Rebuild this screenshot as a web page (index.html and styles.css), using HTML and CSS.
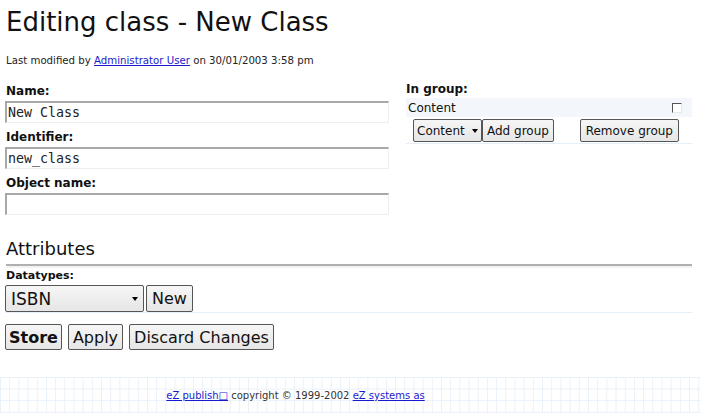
FILE: index.html
```html
<!DOCTYPE html>
<html>
<head>
<meta charset="utf-8">
<link rel="stylesheet" href="styles.css">
</head>
<body>
<div class="page">
  <h1 class="title">Editing class - New Class</h1>
  <p class="modified">Last modified by <a href="#">Administrator User</a> on 30/01/2003 3:58 pm</p>

  <div class="top">
    <div class="left">
      <div class="label">Name:</div>
      <div class="field">New Class</div>
      <div class="label">Identifier:</div>
      <div class="field">new_class</div>
      <div class="label">Object name:</div>
      <div class="field"></div>
    </div>
    <div class="right">
      <div class="label">In group:</div>
      <div class="group-row">
        <span>Content</span>
        <span class="check"></span>
      </div>
      <div class="group-actions">
        <div class="group-left">
          <span class="select small-select">Content <span class="arrow"></span></span>
          <span class="btn">Add group</span>
        </div>
        <span class="btn remove">Remove group</span>
      </div>
    </div>
  </div>

  <h2 class="attr">Attributes</h2>
  <div class="attr-body">
    <div class="dt-label">Datatypes:</div>
    <div class="dt-row">
      <span class="select big-select">ISBN <span class="arrow"></span></span>
      <span class="btn big">New</span>
    </div>
  </div>
  <div class="actions">
    <span class="btn big bold">Store</span>
    <span class="btn big">Apply</span>
    <span class="btn big">Discard Changes</span>
  </div>
</div>
<div class="footer">
  <a href="#">eZ publish&#9633;</a> copyright © 1999-2002 <a href="#">eZ systems as</a>
</div>
</body>
</html>
```

FILE: styles.css
```css
html, body {
  margin: 0;
  padding: 0;
  background: #ffffff;
  font-family: "DejaVu Sans", sans-serif;
  color: #111;
}
.page {
  padding: 0 9px 0 6px;
}
.title {
  font-weight: normal;
  font-size: 26px;
  margin: 0;
  padding-top: 7px;
  line-height: 30px;
}
.modified {
  font-size: 10.2px;
  margin: 18px 0 0 0;
  line-height: 12px;
  color: #222;
}
a { color: #1a1ad0; }
.top {
  display: grid;
  grid-template-columns: 383px 286px;
  column-gap: 17px;
  margin-top: 17px;
  align-items: start;
}
.label {
  font-weight: bold;
  font-size: 12px;
  line-height: 14px;
}
.right .label { margin-top: -2px; }
.left .label { margin-bottom: 3px; }
.field {
  box-sizing: border-box;
  height: 22px;
  border-top: 2px solid #a8a8a8;
  border-left: 2px solid #a8a8a8;
  border-right: 1px solid #eeeeee;
  border-bottom: 1px solid #eeeeee;
  margin-left: -1px;
  font-family: "DejaVu Sans Mono", monospace;
  font-size: 13.3px;
  line-height: 19px;
  padding-left: 1px;
  margin-bottom: 7px;
  color: #222;
}
.field:last-child { margin-bottom: 0; }
.group-row {
  background: #f3f7fb;
  display: flex;
  justify-content: space-between;
  align-items: center;
  font-size: 12px;
  height: 19px;
  padding: 0 10px 0 2px;
  margin-top: 2px;
}
.check {
  box-sizing: border-box;
  width: 10px;
  height: 10px;
  background: #fff;
  border-top: 1px solid #555;
  border-left: 1px solid #555;
  border-right: 1px solid #e8e8e8;
  border-bottom: 1px solid #e8e8e8;
}
.group-actions {
  display: flex;
  justify-content: space-between;
  align-items: center;
  padding: 2px 13px 1px 7px;
  border-bottom: 1px solid #e6eef7;
}
.group-left { display: flex; gap: 0; }
.btn, .select {
  display: inline-flex;
  align-items: center;
  box-sizing: border-box;
  background: linear-gradient(#f6f6f6, #e6e6e6);
  border: 1px solid #555;
  border-radius: 2px;
  font-size: 12px;
  height: 23px;
  padding: 0 4px;
  color: #111;
}
.remove { padding: 0 5px; }
.small-select {
  width: 69px;
  padding-left: 3px;
  padding-right: 3px;
  justify-content: space-between;
}
.arrow {
  width: 0; height: 0;
  border-left: 3px solid transparent;
  border-right: 3px solid transparent;
  border-top: 4px solid #000;
}
.attr {
  font-weight: normal;
  font-size: 18px;
  margin: 22px 0 0 0;
  line-height: 24px;
  border-bottom: 2px solid #b0b0b0;
  padding-bottom: 3px;
  box-shadow: 0 2px 0 #f3f3f3;
}
.attr-body {
  border-bottom: 1px solid #e6eef7;
  padding-top: 4px;
}
.dt-label {
  font-weight: bold;
  font-size: 11px;
  line-height: 12px;
  margin-bottom: 3px;
}
.dt-row { display: flex; gap: 2px; margin-left: -1px; }
.big { font-size: 16px; height: 27px; padding: 0 5px; }
.big-select {
  width: 139px;
  font-size: 17px;
  height: 27px;
  justify-content: space-between;
  padding-left: 5px;
  padding-right: 5px;
}
.bold { font-weight: bold; padding: 0 3px; }
.actions {
  display: flex;
  gap: 6px;
  margin-top: 11px;
  margin-left: -1px;
}
.actions .btn { height: 26px; padding: 0 4px; }
.actions .bold { padding: 0 3px; }
.footer {
  margin-top: 27px;
  height: 36px;
  box-sizing: border-box;
  padding-top: 13px;
  text-align: center;
  font-size: 10px;
  line-height: 12px;
  padding-right: 110px;
  color: #333;
  background-color: #fff;
  background-image:
    linear-gradient(to right, #e9f1f9 1px, transparent 1px),
    linear-gradient(to bottom, #e9f1f9 1px, transparent 1px);
  background-size: 9.2px 11.6px;
}
```
